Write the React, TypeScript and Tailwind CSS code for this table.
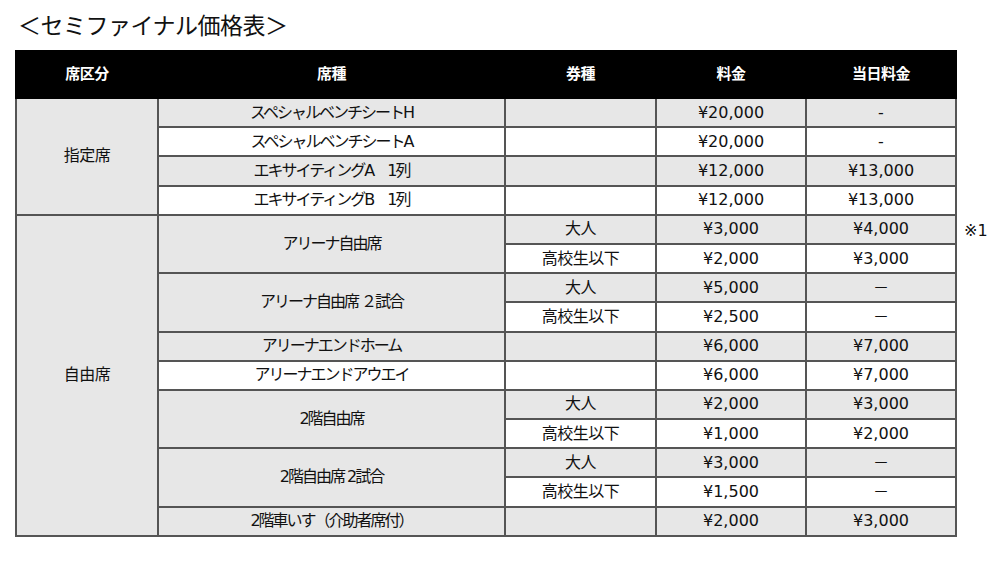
const FONT = { fontFamily: '"DejaVu Sans", "Noto Sans CJK JP", sans-serif' };

type Row = {
  cat?: { label: string; span: number };
  seat?: { label: string; span: number };
  ticket: string;
  price: string;
  dayPrice: string;
  note?: string;
};

const ROWS: Row[] = [
  { cat: { label: "指定席", span: 4 }, seat: { label: "スペシャルベンチシートH", span: 1 }, ticket: "", price: "¥20,000", dayPrice: "-" },
  { seat: { label: "スペシャルベンチシートA", span: 1 }, ticket: "", price: "¥20,000", dayPrice: "-" },
  { seat: { label: "エキサイティングA　1列", span: 1 }, ticket: "", price: "¥12,000", dayPrice: "¥13,000" },
  { seat: { label: "エキサイティングB　1列", span: 1 }, ticket: "", price: "¥12,000", dayPrice: "¥13,000" },
  { cat: { label: "自由席", span: 11 }, seat: { label: "アリーナ自由席", span: 2 }, ticket: "大人", price: "¥3,000", dayPrice: "¥4,000", note: "※1" },
  { ticket: "高校生以下", price: "¥2,000", dayPrice: "¥3,000" },
  { seat: { label: "アリーナ自由席 ２試合", span: 2 }, ticket: "大人", price: "¥5,000", dayPrice: "－" },
  { ticket: "高校生以下", price: "¥2,500", dayPrice: "－" },
  { seat: { label: "アリーナエンドホーム", span: 1 }, ticket: "", price: "¥6,000", dayPrice: "¥7,000" },
  { seat: { label: "アリーナエンドアウエイ", span: 1 }, ticket: "", price: "¥6,000", dayPrice: "¥7,000" },
  { seat: { label: "2階自由席", span: 2 }, ticket: "大人", price: "¥2,000", dayPrice: "¥3,000" },
  { ticket: "高校生以下", price: "¥1,000", dayPrice: "¥2,000" },
  { seat: { label: "2階自由席 2試合", span: 2 }, ticket: "大人", price: "¥3,000", dayPrice: "－" },
  { ticket: "高校生以下", price: "¥1,500", dayPrice: "－" },
  { seat: { label: "2階車いす（介助者席付）", span: 1 }, ticket: "", price: "¥2,000", dayPrice: "¥3,000" },
];

const cell = "border-2 border-[#555] text-center align-middle p-0";

export default function App() {
  return (
    <div className="bg-white w-[993px] h-[578px] pl-[15px] pt-[10px] text-[#111]" style={FONT}>
      <h1 className="text-[23px] leading-[32px] pl-[3px] font-normal tracking-[-0.5px]">＜セミファイナル価格表＞</h1>
      <table className="mt-[8px] border-collapse table-fixed w-[940px] text-[16px]">
        <colgroup>
          <col className="w-[142px]" />
          <col className="w-[347px]" />
          <col className="w-[151px]" />
          <col className="w-[150px]" />
          <col className="w-[150px]" />
        </colgroup>
        <thead>
          <tr className="h-[47px] bg-black text-white font-bold text-[15px] tracking-[-0.5px]">
            <th className="border-2 border-black">席区分</th>
            <th className="border-2 border-black">席種</th>
            <th className="border-2 border-black">券種</th>
            <th className="border-2 border-black">料金</th>
            <th className="border-2 border-black">当日料金</th>
          </tr>
        </thead>
        <tbody>
          {ROWS.map((r, i) => {
            const bg = i % 2 === 0 ? "bg-[#e7e7e7]" : "bg-white";
            return (
              <tr key={i} className="h-[29.2px]">
                {r.cat && (
                  <td rowSpan={r.cat.span} className={`${cell} bg-[#e7e7e7] tracking-[-0.5px]`}>
                    {r.cat.label}
                  </td>
                )}
                {r.seat && (
                  <td rowSpan={r.seat.span} className={`${cell} ${bg} tracking-[-2px]`}>
                    {r.seat.label}
                  </td>
                )}
                <td className={`${cell} ${bg} tracking-[-0.5px]`}>{r.ticket}</td>
                <td className={`${cell} ${bg}`}>{r.price}</td>
                <td className={`${cell} ${bg} relative`}>
                  {r.dayPrice}
                  {r.note && (
                    <span className="absolute left-full top-0 ml-[9px] leading-[29px]">{r.note}</span>
                  )}
                </td>
              </tr>
            );
          })}
        </tbody>
      </table>
    </div>
  );
}
